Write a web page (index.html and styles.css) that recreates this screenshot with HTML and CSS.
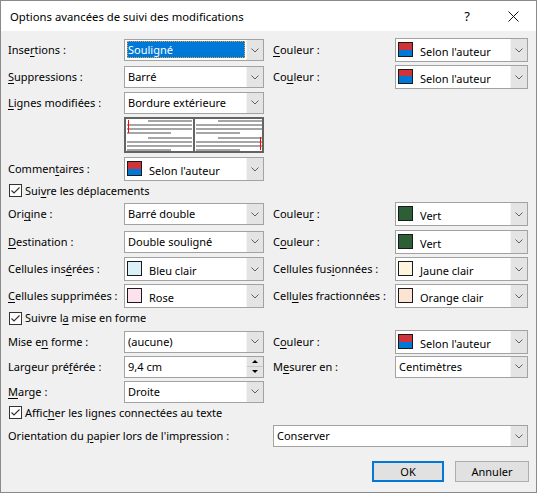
FILE: index.html
```html
<!DOCTYPE html>
<html lang="fr">
<head>
<meta charset="utf-8">
<title>Options avancées de suivi des modifications</title>
<link rel="stylesheet" href="styles.css">
</head>
<body>
<div class="dialog">
  <div class="titlebar">
    <div class="title">Options avancées de suivi des modifications</div>
    <div class="tbtn help">?</div>
    <div class="tbtn close"><svg width="11" height="11" viewBox="0 0 11 11"><path d="M0.5 0.5L10.5 10.5M10.5 0.5L0.5 10.5" stroke="#111" stroke-width="1" fill="none"/></svg></div>
  </div>

  <div class="form">
    <!-- r1 -->
    <div class="lbl l">Inse<u>r</u>tions :</div>
    <div class="combo f"><span class="val sel">Souligné</span><span class="drop"><svg class="chev" width="8" height="5" viewBox="0 0 8 5"><path d="M0.5 0.5L4 4L7.5 0.5"/></svg></span></div>
    <div class="lbl rl"><u>C</u>ouleur :</div>
    <div class="combo tall rf"><span class="sw auteur"></span><span class="val">Selon l'auteur</span><span class="drop"><svg class="chev" width="8" height="5" viewBox="0 0 8 5"><path d="M0.5 0.5L4 4L7.5 0.5"/></svg></span></div>

    <!-- r2 -->
    <div class="lbl l"><u>S</u>uppressions :</div>
    <div class="combo f"><span class="val">Barré</span><span class="drop"><svg class="chev" width="8" height="5" viewBox="0 0 8 5"><path d="M0.5 0.5L4 4L7.5 0.5"/></svg></span></div>
    <div class="lbl rl">Co<u>u</u>leur :</div>
    <div class="combo tall rf"><span class="sw auteur"></span><span class="val">Selon l'auteur</span><span class="drop"><svg class="chev" width="8" height="5" viewBox="0 0 8 5"><path d="M0.5 0.5L4 4L7.5 0.5"/></svg></span></div>

    <!-- r3 -->
    <div class="lbl l"><u>L</u>ignes modifiées :</div>
    <div class="combo f"><span class="val">Bordure extérieure</span><span class="drop"><svg class="chev" width="8" height="5" viewBox="0 0 8 5"><path d="M0.5 0.5L4 4L7.5 0.5"/></svg></span></div>

    <!-- r4 preview -->
    <div class="l"></div>
    <div class="preview f">
      <svg width="140" height="36" viewBox="0 0 140 36">
        <rect x="0" y="0" width="140" height="36" fill="#fff"/>
        <g fill="#a6a6a6">
          <rect x="24" y="3" width="44" height="2"/>
          <rect x="3" y="7" width="65" height="2"/>
          <rect x="3" y="11" width="65" height="2"/>
          <rect x="3" y="15" width="44" height="2"/>
          <rect x="24" y="20" width="44" height="2"/>
          <rect x="3" y="24" width="65" height="2"/>
          <rect x="3" y="28" width="65" height="2"/>
          <rect x="3" y="32" width="44" height="2"/>
          <rect x="94" y="3" width="44" height="2"/>
          <rect x="72" y="7" width="66" height="2"/>
          <rect x="72" y="11" width="66" height="2"/>
          <rect x="72" y="15" width="44" height="2"/>
          <rect x="94" y="20" width="44" height="2"/>
          <rect x="72" y="24" width="66" height="2"/>
          <rect x="72" y="28" width="66" height="2"/>
          <rect x="72" y="32" width="44" height="2"/>
        </g>
        <rect x="4" y="3" width="1" height="13" fill="#ff0000"/>
        <rect x="136" y="20" width="1" height="13" fill="#ff0000"/>
        <rect x="69" y="0" width="2" height="36" fill="#646464"/>
        <rect x="1" y="1" width="138" height="34" fill="none" stroke="#646464" stroke-width="2"/>
      </svg>
    </div>

    <!-- r5 -->
    <div class="lbl l">Commen<u>t</u>aires :</div>
    <div class="combo tall f"><span class="sw auteur"></span><span class="val">Selon l'auteur</span><span class="drop"><svg class="chev" width="8" height="5" viewBox="0 0 8 5"><path d="M0.5 0.5L4 4L7.5 0.5"/></svg></span></div>

    <!-- r6 -->
    <div class="check full"><span class="box"><svg width="11" height="11" viewBox="0 0 11 11"><path d="M1.5 5.5L4 8L9.5 2.5"/></svg></span><span>Sui<u>v</u>re les déplacements</span></div>

    <!-- r7 -->
    <div class="lbl l">Ori<u>g</u>ine :</div>
    <div class="combo f"><span class="val">Barré double</span><span class="drop"><svg class="chev" width="8" height="5" viewBox="0 0 8 5"><path d="M0.5 0.5L4 4L7.5 0.5"/></svg></span></div>
    <div class="lbl rl">Couleu<u>r</u> :</div>
    <div class="combo tall rf"><span class="sw vert"></span><span class="val">Vert</span><span class="drop"><svg class="chev" width="8" height="5" viewBox="0 0 8 5"><path d="M0.5 0.5L4 4L7.5 0.5"/></svg></span></div>

    <!-- r8 -->
    <div class="lbl l"><u>D</u>estination :</div>
    <div class="combo f"><span class="val">Double souligné</span><span class="drop"><svg class="chev" width="8" height="5" viewBox="0 0 8 5"><path d="M0.5 0.5L4 4L7.5 0.5"/></svg></span></div>
    <div class="lbl rl">C<u>o</u>uleur :</div>
    <div class="combo tall rf"><span class="sw vert"></span><span class="val">Vert</span><span class="drop"><svg class="chev" width="8" height="5" viewBox="0 0 8 5"><path d="M0.5 0.5L4 4L7.5 0.5"/></svg></span></div>

    <!-- r9 -->
    <div class="lbl l">Cellules ins<u>é</u>rées :</div>
    <div class="combo tall f"><span class="sw bleu"></span><span class="val">Bleu clair</span><span class="drop"><svg class="chev" width="8" height="5" viewBox="0 0 8 5"><path d="M0.5 0.5L4 4L7.5 0.5"/></svg></span></div>
    <div class="lbl rl">Cellules fus<u>i</u>onnées :</div>
    <div class="combo tall rf"><span class="sw jaune"></span><span class="val">Jaune clair</span><span class="drop"><svg class="chev" width="8" height="5" viewBox="0 0 8 5"><path d="M0.5 0.5L4 4L7.5 0.5"/></svg></span></div>

    <!-- r10 -->
    <div class="lbl l"><u>C</u>ellules supprimées :</div>
    <div class="combo tall f"><span class="sw rose"></span><span class="val">Rose</span><span class="drop"><svg class="chev" width="8" height="5" viewBox="0 0 8 5"><path d="M0.5 0.5L4 4L7.5 0.5"/></svg></span></div>
    <div class="lbl rl">Cell<u>u</u>les fractionnées :</div>
    <div class="combo tall rf"><span class="sw orange"></span><span class="val">Orange clair</span><span class="drop"><svg class="chev" width="8" height="5" viewBox="0 0 8 5"><path d="M0.5 0.5L4 4L7.5 0.5"/></svg></span></div>

    <!-- r11 -->
    <div class="check full"><span class="box"><svg width="11" height="11" viewBox="0 0 11 11"><path d="M1.5 5.5L4 8L9.5 2.5"/></svg></span><span>Suivre l<u>a</u> mise en forme</span></div>

    <!-- r12 -->
    <div class="lbl l">Mise e<u>n</u> forme :</div>
    <div class="combo f"><span class="val">(aucune)</span><span class="drop"><svg class="chev" width="8" height="5" viewBox="0 0 8 5"><path d="M0.5 0.5L4 4L7.5 0.5"/></svg></span></div>
    <div class="lbl rl">C<u>o</u>uleur :</div>
    <div class="combo tall rf"><span class="sw auteur"></span><span class="val">Selon l'auteur</span><span class="drop"><svg class="chev" width="8" height="5" viewBox="0 0 8 5"><path d="M0.5 0.5L4 4L7.5 0.5"/></svg></span></div>

    <!-- r13 -->
    <div class="lbl l">Largeur pré<u>f</u>érée :</div>
    <div class="combo f"><span class="val">9,4 cm</span><span class="spin"><span class="half"><span class="tri up"></span></span><span class="half"><span class="tri down"></span></span></span></div>
    <div class="lbl rl">M<u>e</u>surer en :</div>
    <div class="combo rf"><span class="val">Centimètres</span><span class="drop"><svg class="chev" width="8" height="5" viewBox="0 0 8 5"><path d="M0.5 0.5L4 4L7.5 0.5"/></svg></span></div>

    <!-- r14 -->
    <div class="lbl l"><u>M</u>arge :</div>
    <div class="combo f"><span class="val">Droite</span><span class="drop"><svg class="chev" width="8" height="5" viewBox="0 0 8 5"><path d="M0.5 0.5L4 4L7.5 0.5"/></svg></span></div>

    <!-- r15 -->
    <div class="check full"><span class="box"><svg width="11" height="11" viewBox="0 0 11 11"><path d="M1.5 5.5L4 8L9.5 2.5"/></svg></span><span>Affic<u>h</u>er les lignes connectées au texte</span></div>

    <!-- r16 -->
    <div class="lbl lwide">Orientation du <u>p</u>apier lors de l'impression :</div>
    <div class="combo rwide"><span class="val">Conserver</span><span class="drop"><svg class="chev" width="8" height="5" viewBox="0 0 8 5"><path d="M0.5 0.5L4 4L7.5 0.5"/></svg></span></div>
  </div>

  <div class="buttons">
    <div class="btn ok">OK</div>
    <div class="btn">Annuler</div>
  </div>
</div>
</body>
</html>
```
FILE: styles.css
```css
* { box-sizing: border-box; }
html, body { margin: 0; padding: 0; }
body {
  font-family: "Noto Sans", "Open Sans", sans-serif;
  font-size: 11px;
  color: #000;
  background: #f0f0f0;
}
u { text-decoration-thickness: 1px; text-underline-offset: 1.5px; }

.dialog {
  width: 537px;
  height: 493px;
  border: 1px solid #8a8a8a;
  background: #f0f0f0;
  display: flex;
  flex-direction: column;
}

.titlebar {
  height: 30px;
  background: #fff;
  display: flex;
  align-items: center;
  padding-left: 9px;
  flex: none;
}
.title { flex: 1; font-size: 11.3px; }
.tbtn {
  width: 46px;
  height: 30px;
  display: flex;
  align-items: center;
  justify-content: center;
}
.help { font-size: 13px; }

.form {
  display: grid;
  grid-template-columns: 116px 149px 122px 133px;
  grid-template-rows: 26px 28px 23px 42px 26px 17px 30px 25px 30px 24px 20px 27px 23px 27px 15px 32px;
  padding: 6px 0 0 7px;
  align-items: center;
}
.l { grid-column: 1; }
.f { grid-column: 2; }
.rl { grid-column: 3; }
.rf { grid-column: 4; }
.full { grid-column: 1 / -1; }
.lwide { grid-column: 1 / 3; }
.rwide { grid-column: 3 / 5; }

.lbl { line-height: 16px; white-space: nowrap; }

.combo {
  display: flex;
  height: 22px;
  width: 140px;
  background: #fff;
  border: 1px solid #a2a2a2;
}
.combo.rf { width: 133px; }
.combo.rwide { width: 255px; }
.combo.tall { height: 24px; }

.val {
  flex: 1;
  padding-left: 3px;
  line-height: 20px;
  white-space: nowrap;
  overflow: hidden;
}
.val.sel {
  margin: 1px 1px 2px 2px;
  padding-left: 1px;
  line-height: 17px;
  background: #0078d7;
  color: #fff;
  outline: 1px dotted #e8a040;
  outline-offset: -1px;
}
.tall .val {
  align-self: flex-end;
  line-height: 16px;
  margin-bottom: 1px;
  padding-left: 7px;
}
.sw {
  width: 15px;
  height: 15px;
  margin: 3px 0 0 2px;
  border: 1px solid #1a1a1a;
  flex: none;
}
.sw.auteur { background: linear-gradient(#d13438 50%, #0078d7 50%); }
.sw.vert { background: #2c5f35; }
.sw.bleu { background: #dcf0f8; }
.sw.rose { background: #fce2ec; }
.sw.jaune { background: #fff4dd; }
.sw.orange { background: #fde3d3; }

.drop {
  width: 17px;
  flex: none;
  background: #e4e4e4;
  border-left: 1px solid #f4f4f4;
  display: flex;
  align-items: center;
  justify-content: center;
}
.chev path { fill: none; stroke: #606060; stroke-width: 1; }

.spin {
  width: 17px;
  flex: none;
  display: flex;
  flex-direction: column;
  background: #e4e4e4;
  border-left: 1px solid #f4f4f4;
}
.half {
  flex: 1;
  display: flex;
  align-items: center;
  justify-content: center;
}
.half + .half { border-top: 1px solid #c8c8c8; }
.tri { width: 0; height: 0; border-left: 3px solid transparent; border-right: 3px solid transparent; }
.tri.up { border-bottom: 3px solid #000; }
.tri.down { border-top: 3px solid #000; }

.preview { height: 36px; width: 140px; }
.preview svg { display: block; }

.check {
  display: flex;
  align-items: center;
  line-height: 16px;
  padding-left: 1px;
}
.box {
  width: 13px;
  height: 13px;
  border: 1px solid #333;
  background: #fff;
  margin-right: 3px;
  display: flex;
  align-items: center;
  justify-content: center;
}
.box svg { display: block; }
.box path { fill: none; stroke: #333; stroke-width: 1.2; }

.buttons {
  display: flex;
  justify-content: flex-end;
  gap: 11px;
  margin-top: 9px;
  padding-right: 7px;
}
.btn {
  height: 21px;
  width: 74px;
  background: #e1e1e1;
  border: 1px solid #adadad;
  display: flex;
  align-items: center;
  justify-content: center;
  line-height: 16px;
}
.btn.ok {
  width: 72px;
  border: 2px solid #0078d7;
}
```
